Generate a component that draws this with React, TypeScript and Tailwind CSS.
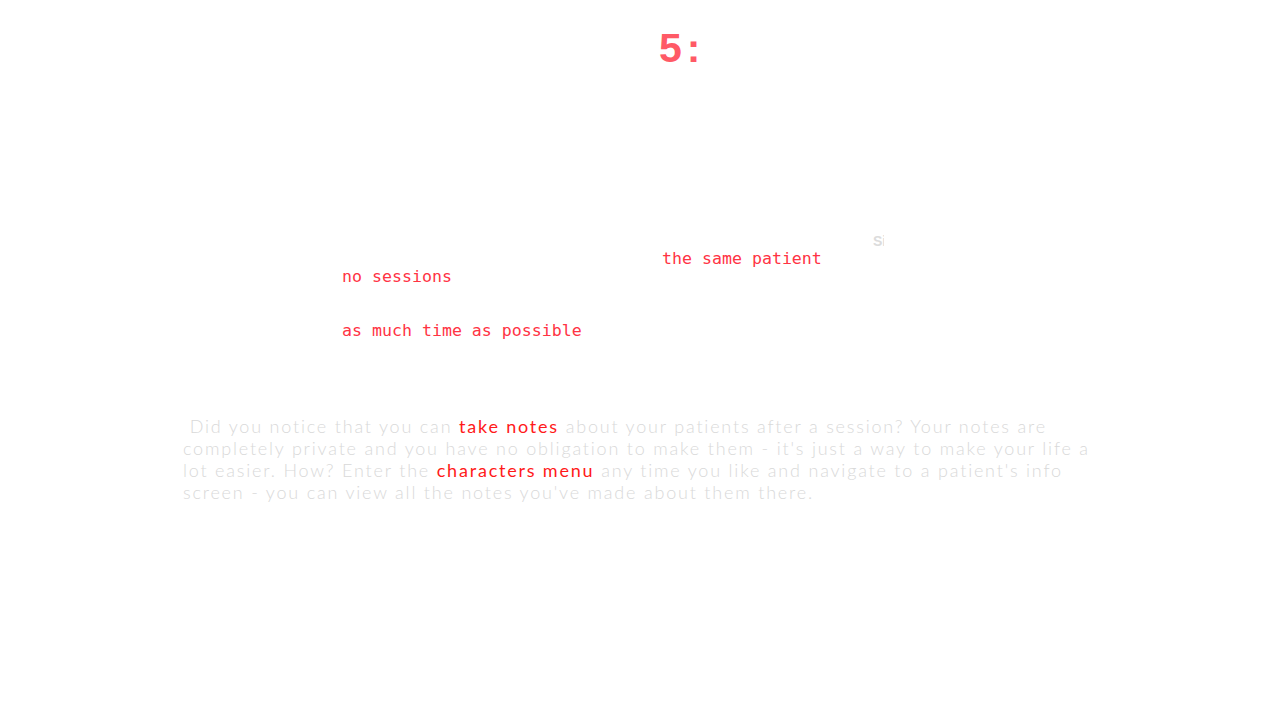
import React from "react";

export default function App() {
  const mono = { fontFamily: '"DejaVu Sans Mono", monospace' };
  return (
    <div className="w-[1280px] h-[720px] bg-white overflow-hidden relative">
      <div className="flex pt-[28px] pl-[659px]">
        <div
          className="text-[41px] leading-[41px] font-bold text-[#ff5a66] tracking-[5px]"
          style={{ fontFamily: '"Liberation Sans", sans-serif' }}
        >
          5:
        </div>
      </div>

      <div className="mt-[163px] pl-[342px]" style={mono}>
        <div className="flex items-start h-[18px]">
          <div className="w-[531px]" />
          <span
            className="text-[14px] font-bold text-[#dcdcdc] w-[11px] overflow-hidden leading-[18px]"
            style={{ fontFamily: '"Liberation Sans", sans-serif' }}
          >
            Si
          </span>
        </div>
        <div className="flex h-[18px]">
          <div className="w-[320px]" />
          <span className="text-[16.6px] leading-[18px] text-[#ff3344]">the same patient</span>
        </div>
        <div className="text-[16.6px] leading-[18px] text-[#ff3344] h-[36px]">no sessions</div>
        <div className="text-[16.6px] leading-[18px] text-[#ff3344] mt-[18px]">as much time as possible</div>
      </div>

      <p
        className="mt-[75px] ml-[183px] w-[915px] text-[18px] leading-[22px] tracking-[1.8px] font-light text-[#d9d9d9]"
        style={{ fontFamily: 'Lato, sans-serif' }}
      >
        &nbsp;Did you notice that you can <span className="text-[#ff1a1a] font-normal">take notes</span> about your patients after a session? Your notes are completely private and you have no obligation to make them - it's just a way to make your life a lot easier. How? Enter the <span className="text-[#ff1a1a] font-normal">characters menu</span> any time you like and navigate to a patient's info screen - you can view all the notes you've made about them there.
      </p>
    </div>
  );
}
